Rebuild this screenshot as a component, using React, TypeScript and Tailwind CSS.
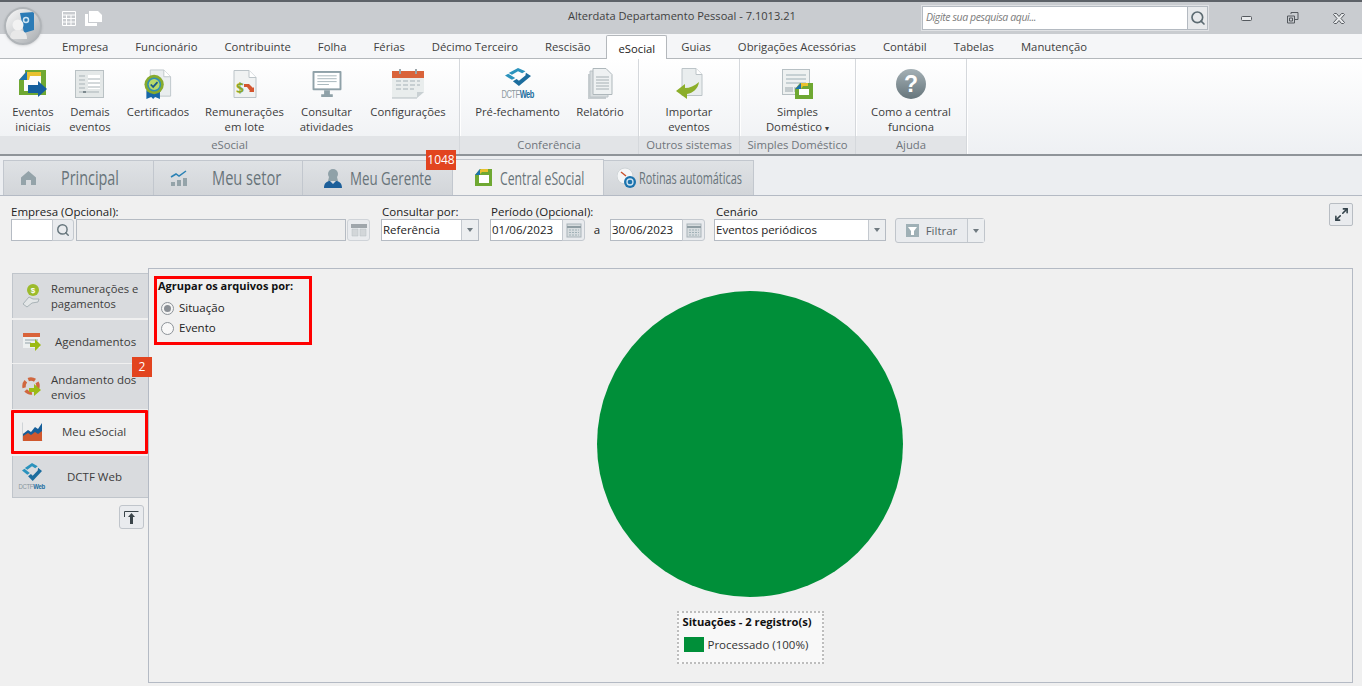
import type { ReactNode } from "react";
import { Search, Maximize2 } from "lucide-react";

const menuItems = ["Empresa", "Funcionário", "Contribuinte", "Folha", "Férias", "Décimo Terceiro", "Rescisão", "eSocial", "Guias", "Obrigações Acessórias", "Contábil", "Tabelas", "Manutenção"];

function EventosIcon() {
  return (
    <svg width="30" height="29" viewBox="0 0 30 29">
      <path d="M7 0h21v25H1V10h5v11h17V5H7z" fill="#6fa832" />
      <path d="M1 10 8 2h15v4H12l-1 4z" fill="#e8c12f" />
      <path d="M1 10 9 1v9z" fill="#1c73ad" />
      <path d="M10 15h10v-4l9 8-9 8v-4H10z" fill="#155f9e" />
    </svg>
  );
}

function DemaisIcon() {
  return (
    <svg width="30" height="29" viewBox="0 0 30 29">
      <rect x="0.5" y="0.5" width="28" height="27" fill="#e4e8e8" stroke="#b9c1c4" />
      <rect x="13" y="5" width="12" height="14" fill="#fff" />
      <path d="M4 6h6M4 10h6M4 14h6M4 18h6M13 9h12M13 13h12M13 17h12M4 22h20" stroke="#a9b3b7" />
      <rect x="8" y="21" width="3" height="2" fill="#7d898e" />
    </svg>
  );
}

function CertificadoIcon() {
  return (
    <svg width="30" height="31" viewBox="0 0 30 32">
      <path d="M7 1h14l7 7v20H7z" fill="#e9edee" stroke="#bfc7cb" />
      <path d="M21 1v7h7" fill="#fff" stroke="#bfc7cb" />
      <path d="M3 22v9l5-2 2 2 2-2 5 2v-9z" fill="#1767a8" />
      <circle cx="11" cy="16" r="10" fill="#87ab2c" />
      <circle cx="11" cy="16" r="7.2" fill="#2f8fb5" />
      <circle cx="11" cy="16" r="5.6" fill="#b8d96a" />
      <path d="m7.5 16 2.5 2.5 4.500-5" fill="none" stroke="#1a5a8a" strokeWidth="1.800" />
    </svg>
  );
}

function RemuneracaoIcon() {
  return (
    <svg width="24" height="29" viewBox="0 0 24 29">
      <path d="M1 .5h15l7 7v20H1z" fill="#f0f2f2" stroke="#bcc4c8" />
      <path d="M16 .5v7h7" fill="#fff" stroke="#bcc4c8" />
      <text x="3" y="23" fontSize="14" fontWeight="700" fill="#8ba82a" fontFamily="Open Sans">$</text>
      <path d="M11 14h5l4 4 1-1v5h-5l1-1-3-4h-3z" fill="#d4552f" />
    </svg>
  );
}

function ConsultarIcon() {
  return (
    <svg width="30" height="27" viewBox="0 0 30 28">
      <rect x="0" y="0" width="30" height="20" rx="1" fill="#8fa1a8" />
      <rect x="2" y="2" width="26" height="16" fill="#fff" />
      <path d="M5 5h20M5 8h20M5 11h20M5 14h12" stroke="#a8b6bb" />
      <path d="M12 20h6v4h3v3H9v-3h3z" fill="#8fa1a8" />
    </svg>
  );
}

function ConfigIcon() {
  return (
    <svg width="32" height="30" viewBox="0 0 32 30">
      <path d="M0 8h32v15l-7 6H0z" fill="#e9eded" />
      <path d="M0 2h32v7H0z" fill="#d9633a" />
      <rect x="7" y="0" width="2" height="5" fill="#9aa5a9" />
      <rect x="23" y="0" width="2" height="5" fill="#9aa5a9" />
      <path d="M4 12h24M4 16h24M4 20h18" stroke="#c7cfd2" strokeWidth="2" strokeDasharray="5 2" />
      <path d="M25 29v-6h7z" fill="#c9d0d3" />
      <path d="M0 29h25" stroke="#b4bdc1" />
    </svg>
  );
}

function DctfLogo({ small }: { small?: boolean }) {
  return (
    <div className="flex flex-col items-center shrink-0">
      <svg width={small ? 20 : 26} height={18} viewBox="0 0 28 19" preserveAspectRatio="none">
        <path d="M14 0 22 3.500 18.500 5.500 14 3.500 7.500 7 4 5.200z" fill="#2b93bd" />
        <path d="M0 8 3.500 6.200 11 10.500 7.500 12.500z" fill="#2b93bd" />
        <path d="M22.500 5 28 8.500 15 19 8.500 14 12.500 11.500 15 13.500 22 8z" fill="#1c6d9e" />
      </svg>
      <div className={`font-['Liberation_Sans',sans-serif] leading-none whitespace-nowrap text-[#8b979d] ${small ? "text-[8px] tracking-[-0.4px] mt-[2px] scale-x-[0.75]" : "text-[10px] tracking-[-0.6px] mt-[4px] scale-x-[0.75]"}`}>
        DCTF<span className="font-bold text-[#1c6d9e]">Web</span>
      </div>
    </div>
  );
}

function RelatorioIcon() {
  return (
    <svg width="26" height="32" viewBox="0 0 26 32">
      <path d="M1 6h18v25H1z" fill="#c7cdd0" />
      <path d="M3 3h18v26H3z" fill="#d9dee0" stroke="#bcc4c8" />
      <path d="M6 .5h13l6 6v20H6z" fill="#eef1f2" stroke="#aeb7bb" />
      <path d="M9 9h13M9 12h13M9 15h13M9 18h13M9 21h13" stroke="#a6b0b4" />
    </svg>
  );
}

function ImportarIcon() {
  return (
    <svg width="28" height="32" viewBox="0 0 28 32">
      <path d="M7 .5h14l6 6v21H7z" fill="#e9edee" stroke="#bcc4c8" />
      <path d="M21 .5v6h6" fill="#fff" stroke="#bcc4c8" />
      <path d="M24 14c-1 7-6 11-12 12v5L1 23l9-7v4c5 0 9-2 14-6z" fill="#8cae2a" />
    </svg>
  );
}

function SimplesIcon() {
  return (
    <svg width="32" height="31" viewBox="0 0 32 31">
      <rect x="0.500" y="0.500" width="27" height="25" fill="#eef1f1" stroke="#b7c0c4" />
      <path d="M4 6h20M4 10h20M4 14h20" stroke="#9fb0b6" />
      <path d="M4 18v5M6 18v5M8 18v5M10 18v5M13 18v5" stroke="#9aa6ab" />
      <path d="M13 30V20l5-6h13v16z" fill="#6fa832" />
      <path d="M13 20l6-6h7v3h-5l-2 3z" fill="#e8c12f" />
      <path d="M13 20l6-6v6z" fill="#1c73ad" />
      <rect x="17" y="20" width="10" height="6" fill="#fff" />
    </svg>
  );
}

function AjudaIcon() {
  return (
    <svg width="32" height="32" viewBox="0 0 32 32">
      <defs>
        <linearGradient id="aj" x1="0" y1="0" x2="0" y2="1">
          <stop offset="0" stopColor="#a4b0b5" />
          <stop offset="1" stopColor="#66757b" />
        </linearGradient>
      </defs>
      <circle cx="16" cy="16" r="15" fill="url(#aj)" />
      <text x="16" y="24" textAnchor="middle" fontSize="23" fontWeight="700" fill="#fff" fontFamily="Liberation Sans">?</text>
    </svg>
  );
}

function RibbonItem({ icon, label, className }: { icon: ReactNode; label: ReactNode; className: string }) {
  return (
    <div className={`flex flex-col items-center shrink-0 ${className}`}>
      <div className="h-[38px] flex items-center justify-center">{icon}</div>
      <div className="text-center leading-[15px] mt-[1px] whitespace-nowrap">{label}</div>
    </div>
  );
}

function RibbonGroup({ title, className, children }: { title: string; className: string; children: ReactNode }) {
  return (
    <div className={`flex flex-col shrink-0 border-r border-[#d5d8dc] shadow-[1px_0_0_#ffffff] ${className}`}>
      <div className="flex-1 flex justify-center pt-[6px] gap-4">{children}</div>
      <div className="h-[18px] bg-[#e2e4e7] text-center text-[#6f757b] leading-[18px] whitespace-nowrap">{title}</div>
    </div>
  );
}

function Badge({ children, className }: { children: ReactNode; className: string }) {
  return <div className={`absolute z-10 bg-[#e2441f] text-white text-[12px] flex items-center justify-center ${className}`}>{children}</div>;
}

function MainTab({ icon, label, labelClass, active, className }: { icon: ReactNode; label: string; labelClass: string; active?: boolean; className: string }) {
  return (
    <div className={`relative flex items-center shrink-0 border-[#c2c7ce] border-t border-r ${active ? "h-[36px] bg-[#f0f0f0]" : "h-[35px] bg-gradient-to-b from-[#dfe2e5] to-[#d2d5d9]"} ${className}`}>
      {icon}
      <span className={`text-[#68747a] leading-none origin-left whitespace-nowrap ${labelClass}`}>{label}</span>
    </div>
  );
}

function CalendarButton() {
  return (
    <div className="w-[23px] h-[22px] border border-[#c4c9cf] bg-[#e9ebee] rounded-r-[3px] flex items-center justify-center">
      <svg width="16" height="16" viewBox="0 0 16 16">
        <rect x="1" y="2" width="14" height="13" fill="#d7dcdf" stroke="#a9b4b9" />
        <path d="M1 5h14" stroke="#8f9da3" strokeWidth="2" />
        <path d="M3 8h10M3 10.500h10M3 13h10" stroke="#9fb0b6" strokeDasharray="2 1" />
      </svg>
    </div>
  );
}

function DateField({ value }: { value: string }) {
  return (
    <div className="flex">
      <div className="h-[22px] w-[73px] bg-white border border-[#b5bbc3] pl-[1px] leading-[20px] text-[#222]">{value}</div>
      <div className="-ml-px"><CalendarButton /></div>
    </div>
  );
}

function FieldCaret() {
  return (
    <div className="w-[17px] h-full border-l border-[#c4c9cf] bg-[#eceef0] flex items-center justify-center">
      <div className="w-0 h-0 border-x-[3.5px] border-x-transparent border-t-[4px] border-t-[#6f7a80]" />
    </div>
  );
}

function SideItem({ icon, className, active, children }: { icon: ReactNode; className: string; active?: boolean; children: ReactNode }) {
  return (
    <div className={`flex items-center shrink-0 ${active ? "bg-[#f0f0f0] border-[3px] border-[#ff0000] w-[137px] rounded-[1px]" : "bg-[#d9dbde] border-l border-[#c0c5cb] ml-px w-[136px]"} ${className}`}>
      <div className="w-[38px] flex justify-center shrink-0">{icon}</div>
      {children}
    </div>
  );
}

export default function App() {
  return (
    <div className="w-[1362px] h-[686px] overflow-hidden bg-[#f0f0f0] flex flex-col relative font-['Open_Sans',sans-serif] text-[11.5px] text-[#333]">
      {/* title bar */}
      <div className="h-[34px] shrink-0 bg-[#c9ccd0] border-t-2 border-[#5d6268] flex items-center relative">
        <div className="absolute left-[4px] top-[5px] z-20 w-[38px] h-[38px] rounded-full border-2 border-[#b0b4b8] bg-gradient-to-br from-[#fafafa] to-[#a9adb1] flex items-center justify-center overflow-hidden shadow">
          <svg width="26" height="28" viewBox="0 0 26 28">
            <path d="M10 1 24 0v18l-10 3z" fill="#2b7bb6" />
            <circle cx="16" cy="8" r="2.500" fill="none" stroke="#cde4f2" strokeWidth="1.500" />
            <circle cx="8" cy="13" r="5.500" fill="#f2f2f2" />
            <path d="M0 27c0-7 3-9 8-9s9 2 9 9z" fill="#e8e8e8" />
          </svg>
        </div>
        <div className="flex items-center gap-[9px] ml-[62px]">
          <svg width="14" height="15" viewBox="0 0 14 15"><path d="M.5.5h13v14H.5zM.5 4h13M.5 7.500h13M.5 11h13M4.500 4v10.500M9 4v10.500" fill="none" stroke="#fff" /></svg>
          <svg width="17" height="15" viewBox="0 0 17 15"><path d="M0 3h3v9h9v3H0z M4 0h9l4 4v7H4z" fill="#fff" /></svg>
        </div>
        <div className="absolute left-[568px] top-[6px] text-[11.1px] text-[#3f3f3f] whitespace-nowrap">Alterdata Departamento Pessoal - 7.1013.21</div>
        <div className="ml-auto flex items-center">
          <div className="w-[288px] h-[26px] mr-[14px] border-[2px] border-[#e0e2e5] bg-white flex items-center outline outline-1 -outline-offset-2 outline-[#b4bac1]">
            <span className="flex-1 pl-[3px] italic text-[10.5px] tracking-[-0.4px] text-[#7c7c7c] whitespace-nowrap">Digite sua pesquisa aqui...</span>
            <div className="w-[20px] h-full bg-[#e8eaec] border-l border-[#b4bac1] flex items-center justify-center">
              <Search size={16} strokeWidth={2.500} className="text-[#5c6b72]" />
            </div>
          </div>
          <div className="w-[47px] flex justify-center">
            <svg width="11" height="5" viewBox="0 0 11 5"><rect x=".5" y=".5" width="10" height="4" rx="1" fill="#e8eaec" stroke="#54595e" /></svg>
          </div>
          <div className="w-[46px] flex justify-center">
            <svg width="12" height="12" viewBox="0 0 12 12"><path d="M4 2V.5h7v7H8M.5 4h7v7h-7z" fill="none" stroke="#54595e" /><path d="M2.500 6h3v3h-3z" fill="none" stroke="#54595e" /></svg>
          </div>
          <div className="w-[46px] flex justify-center">
            <svg width="12" height="11" viewBox="0 0 12 11"><path d="M.5 1.500 1.500.5h2L6 3.500 8.500.5h2l1 1L8 5.500l3.500 4-1 1h-2L6 7.500l-2.500 3h-2l-1-1L4 5.500z" fill="#e8eaec" stroke="#54595e" /></svg>
          </div>
        </div>
      </div>
      {/* menu tabs */}
      <div className="h-[25px] shrink-0 bg-[#f5f6f8] border-b border-[#b4b8bc] flex items-end pl-[62px] gap-[27px] text-[11.3px] text-[#404040]">
        {menuItems.map((item) =>
          item === "eSocial" ? (
            <div key={item} className="h-[24px] -ml-[11px] -mr-[13px] px-[11px] -mb-px bg-white border border-b-0 border-[#b4b8bc] rounded-t-[2px] leading-[25px] whitespace-nowrap text-[#222]">{item}</div>
          ) : (
            <div key={item} className="h-[24px] leading-[26px] whitespace-nowrap">{item}</div>
          )
        )}
      </div>
      {/* ribbon */}
      <div className="h-[97px] shrink-0 flex bg-gradient-to-b from-white to-[#eef0f3] border-b-2 border-[#8f9499] text-[11.3px] text-[#3c3c3c]">
        <RibbonGroup title="eSocial" className="w-[460px]">
          <RibbonItem icon={<EventosIcon />} label={<>Eventos<br />iniciais</>} className="w-[41px]" />
          <RibbonItem icon={<DemaisIcon />} label={<>Demais<br />eventos</>} className="w-[41px]" />
          <RibbonItem icon={<CertificadoIcon />} label="Certificados" className="w-[63px]" />
          <RibbonItem icon={<RemuneracaoIcon />} label={<>Remunerações<br />em lote</>} className="w-[78px]" />
          <RibbonItem icon={<ConsultarIcon />} label={<>Consultar<br />atividades</>} className="w-[54px]" />
          <RibbonItem icon={<ConfigIcon />} label="Configurações" className="w-[77px]" />
        </RibbonGroup>
        <RibbonGroup title="Conferência" className="w-[179px]">
          <RibbonItem icon={<DctfLogo />} label="Pré-fechamento" className="w-[86px]" />
          <RibbonItem icon={<RelatorioIcon />} label="Relatório" className="w-[47px]" />
        </RibbonGroup>
        <RibbonGroup title="Outros sistemas" className="w-[101px]">
          <RibbonItem icon={<ImportarIcon />} label={<>Importar<br />eventos</>} className="w-[47px]" />
        </RibbonGroup>
        <RibbonGroup title="Simples Doméstico" className="w-[116px]">
          <RibbonItem icon={<SimplesIcon />} label={<>Simples<br />Doméstico <span className="text-[8px] align-middle">▾</span></>} className="w-[66px]" />
        </RibbonGroup>
        <RibbonGroup title="Ajuda" className="w-[111px]">
          <RibbonItem icon={<AjudaIcon />} label={<>Como a central<br />funciona</>} className="w-[81px]" />
        </RibbonGroup>
      </div>
      {/* main tabs */}
      <div className="h-[39px] shrink-0 bg-[#eceef1] flex items-end pl-[3px] relative z-10">
        <MainTab className="w-[151px] pl-[17px] gap-[25px] border-l" labelClass="text-[20px] scale-x-[0.72]" icon={
          <svg width="15" height="14" viewBox="0 0 15 14" className="shrink-0"><path d="M7.500 0 15 6.500V14H10V9H5v5H0V6.500z" fill="#94a3a9" /></svg>
        } label="Principal" />
        <MainTab className="w-[149px] pl-[16px] gap-[24px]" labelClass="text-[20px] scale-x-[0.73]" icon={
          <svg width="18" height="16" viewBox="0 0 18 16" className="shrink-0"><path d="M1 7l5-3 3 2 7-5" fill="none" stroke="#2b82b5" strokeWidth="1.500" /><path d="M1 12h4v4H1zM7 10h4v6H7zM13 8h4v8h-4z" fill="#94a3a9" /></svg>
        } label="Meu setor" />
        <MainTab className="w-[150px] pl-[21px] gap-[8px]" labelClass="text-[18px] scale-x-[0.74]" icon={
          <svg width="18" height="20" viewBox="0 0 18 20" className="shrink-0"><circle cx="9" cy="6" r="5" fill="#8fa1a8" /><path d="M5 9h8l1 4H4z" fill="#8fa1a8" /><path d="M0 20c0-5 3-7 6-7l3 3 3-3c3 0 6 2 6 7z" fill="#1c5f9a" /></svg>
        } label="Meu Gerente" />
        <MainTab active className="w-[151px] pl-[22px] gap-[8px]" labelClass="text-[18px] scale-x-[0.68]" icon={
          <svg width="17" height="17" viewBox="0 0 17 17" className="shrink-0"><path d="M0 17V6l5-6h12v17z" fill="#6fa832" /><path d="M0 6l6-6h7v3H7L4 6z" fill="#e8c12f" /><path d="M0 6l5-6v6z" fill="#1c73ad" /><rect x="4" y="6" width="10" height="8" fill="#fff" /></svg>
        } label="Central eSocial" />
        <MainTab className="w-[150px] pl-[13px] gap-[2px]" labelClass="text-[16px] scale-x-[0.68]" icon={
          <svg width="20" height="22" viewBox="0 0 20 22" className="shrink-0"><circle cx="8" cy="9" r="8" fill="#f5f6f7" stroke="#cfd4d7" /><path d="M4 5l5 4" stroke="#c9502c" strokeWidth="1.500" /><circle cx="13" cy="15" r="6" fill="#1c73ad" /><circle cx="13" cy="15" r="3" fill="none" stroke="#cfe4f2" strokeWidth="1.300" /></svg>
        } label="Rotinas automáticas" />
        <Badge className="left-[426px] -top-[6px] w-[30px] h-[20px]">1048</Badge>
      </div>
      {/* content */}
      <div className="flex-1 border-t border-[#b4bac4] flex flex-col pl-[11px] pr-[9px]">
        <div className="flex items-start h-[72px] pt-[8px] shrink-0">
          <div className="flex flex-col w-[359px]">
            <label className="h-[15px] leading-[15px] text-[#222]">Empresa (Opcional):</label>
            <div className="flex">
              <div className="w-[42px] h-[22px] bg-white border border-[#b5bbc3]" />
              <div className="w-[22px] h-[22px] -ml-px bg-[#e9ebee] border border-[#c4c9cf] rounded-r-[3px] flex items-center justify-center"><Search size={14} strokeWidth={2.500} className="text-[#66767d]" /></div>
              <div className="w-[270px] h-[22px] ml-[2px] bg-[#eeeeee] border border-[#b5bbc3]" />
              <div className="w-[23px] h-[22px] ml-[1px] bg-[#e9ebee] border border-[#cfd3d8] rounded-[3px] flex items-center justify-center">
                <svg width="16" height="13" viewBox="0 0 16 13"><path d="M0 0h16v4H0z" fill="#9fa6ab" /><path d="M1 5h6v7H1zM9 5h6v7H9z" fill="#d2d6d9" stroke="#b6bcc0" strokeWidth=".5" /></svg>
              </div>
            </div>
          </div>
          <div className="flex flex-col w-[111px] ml-[11px]">
            <label className="h-[15px] leading-[15px] pl-[1px] text-[#222] whitespace-nowrap">Consultar por:</label>
            <div className="w-[98px] h-[22px] bg-white border border-[#b5bbc3] flex items-center justify-between pl-[1px] text-[#222]">Referência<FieldCaret /></div>
          </div>
          <div className="flex flex-col w-[224px] -ml-[2px]">
            <label className="h-[15px] leading-[15px] pl-[1px] text-[#222] whitespace-nowrap">Período (Opcional):</label>
            <div className="flex items-center">
              <DateField value="01/06/2023" />
              <span className="w-[26px] text-center text-[#222] -ml-px">a</span>
              <DateField value="30/06/2023" />
            </div>
          </div>
          <div className="flex flex-col w-[172px]">
            <label className="h-[15px] leading-[15px] pl-[2px] text-[#222]">Cenário</label>
            <div className="w-[172px] h-[22px] bg-white border border-[#b5bbc3] flex items-center justify-between pl-[1px] text-[#222]">Eventos periódicos<FieldCaret /></div>
          </div>
          <div className="flex h-[25px] mt-[14px] ml-[9px] w-[90px] border border-[#c0c5cb] rounded-[3px] bg-[#e9ebee] text-[#5a646a]">
            <div className="flex-1 flex items-center justify-center gap-[7px]">
              <svg width="13" height="13" viewBox="0 0 13 13"><rect width="13" height="13" fill="#9fb0b6" /><path d="M2 3h9L8 7v4H5V7z" fill="#fff" /></svg>
              Filtrar
            </div>
            <FieldCaret />
          </div>
          <div className="ml-auto -mt-[1px] w-[24px] h-[23px] bg-[#e9ebee] border border-[#b8bdc3] rounded-[2px] flex items-center justify-center">
            <Maximize2 size={15} strokeWidth={2.500} className="text-[#33424a]" />
          </div>
        </div>
        <div className="flex flex-1 min-h-0 mb-[3px]">
          {/* sidebar */}
          <div className="w-[137px] shrink-0 flex flex-col pt-[5px] relative">
            <SideItem className="h-[45px] border-t border-[#c0c5cb] mb-[2px]" icon={
              <svg width="20" height="24" viewBox="0 0 20 24"><circle cx="11" cy="6" r="6" fill="#9cbb2c" /><text x="11" y="9" textAnchor="middle" fontSize="8" fontWeight="700" fill="#fff" fontFamily="Liberation Sans">$</text><path d="M1 20l6-7 4 2h6l-1 3-6 1-5 4z" fill="#e3e6e7" stroke="#a9b3b7" /></svg>
            }>
              <div className="leading-[15px] text-[11.2px] text-[#3c3c3c] whitespace-nowrap">Remunerações e<br />pagamentos</div>
            </SideItem>
            <SideItem className="h-[43px] mb-[1px]" icon={
              <svg width="20" height="20" viewBox="0 0 20 20"><path d="M1 1h17v15H1z" fill="#edf0f0" /><path d="M1 1h17v4H1z" fill="#d9633a" /><path d="M3 8h13M3 11h6" stroke="#c0c9cc" strokeWidth="2" /><path d="M8 11h5V7l6 6-6 6v-4H8z" fill="#9cbb14" /></svg>
            }>
              <div className="flex-1 pl-[4px] text-[#3c3c3c] whitespace-nowrap">Agendamentos</div>
            </SideItem>
            <SideItem className="h-[45px] mb-[1px]" icon={
              <svg width="20" height="20" viewBox="0 0 20 20"><circle cx="9" cy="9" r="7" fill="none" stroke="#d0673f" strokeWidth="3.500" strokeDasharray="7 3" /><path d="M7 11h5V7l7 6-7 6v-4H7z" fill="#9cbb14" /></svg>
            }>
              <div className="leading-[15px] text-[#3c3c3c] whitespace-nowrap">Andamento dos<br />envios</div>
            </SideItem>
            <SideItem active className="h-[44px] mb-[2px]" icon={
              <svg width="22" height="20" viewBox="0 0 22 20"><path d="M.5.500v18h20" fill="none" stroke="#cfd4d7" /><path d="M1 12l5-3 3 2 4-4 3 2 4-6v16H1z" fill="#d0582e" /><path d="M1 12l5-4 3 2 4-5 3 2 4-6v8l-4 3-3-2-4 3-3-2-5 3z" fill="#165f9a" /></svg>
            }>
              <div className="flex-1 pl-[10px] text-[#3c3c3c] whitespace-nowrap">Meu eSocial</div>
            </SideItem>
            <SideItem className="h-[42px] border-b border-[#c0c5cb]" icon={<DctfLogo small />}>
              <div className="flex-1 pl-[16px] text-[#3c3c3c] whitespace-nowrap">DCTF Web</div>
            </SideItem>
            <div className="self-end mt-[7px] mr-[4px] w-[25px] h-[24px] bg-[#e9ebee] border border-[#c0c5cb] rounded-[3px] flex items-center justify-center">
              <svg width="15" height="14" viewBox="0 0 15 14"><path d="M.5 7V1.500h14" fill="none" stroke="#3a4449" /><path d="M7.500 3 11 7H9v7H6V7H4z" fill="#3a4449" /></svg>
            </div>
            <Badge className="left-[121px] top-[89px] w-[20px] h-[20px]">2</Badge>
          </div>
          {/* chart panel */}
          <div className="flex-1 border border-[#b4bac4] flex flex-col items-center pt-[22px] pr-[1px] relative">
            <div className="absolute left-[5px] top-[7px] w-[158px] h-[69px] border-[3px] border-[#ff0000] pl-[1px] text-[#222]">
              <div className="font-bold text-[11px] text-[#111] leading-[14px] mb-[5px] whitespace-nowrap">Agrupar os arquivos por:</div>
              <div className="flex items-center gap-[5px] pl-[3px] h-[20px]">
                <span className="w-[13px] h-[13px] rounded-full border border-[#8d9399] bg-[#f4f4f4] flex items-center justify-center"><span className="w-[7px] h-[7px] rounded-full bg-[#8a8f95]" /></span>
                Situação
              </div>
              <div className="flex items-center gap-[5px] pl-[3px] h-[20px]">
                <span className="w-[13px] h-[13px] rounded-full border border-[#8d9399] bg-[#f8f8f8]" />
                Evento
              </div>
            </div>
            <svg width="306" height="306" viewBox="0 0 306 306" className="shrink-0">
              <circle cx="153" cy="153" r="153" fill="#008f39" />
            </svg>
            <div className="mt-[14px] w-[147px] h-[53px] border-2 border-dotted border-[#bdbdbd] bg-[#f8f8f8] pl-[4px]">
              <div className="font-bold text-[11.2px] text-[#111] leading-[18px] whitespace-nowrap">Situações - 2 registro(s)</div>
              <div className="flex items-center gap-[4px] mt-[5px]">
                <span className="w-[20px] h-[15px] bg-[#008f39] ml-[1px]" />
                <span className="whitespace-nowrap text-[#333]">Processado (100%)</span>
              </div>
            </div>
          </div>
        </div>
      </div>
    </div>
  );
}
